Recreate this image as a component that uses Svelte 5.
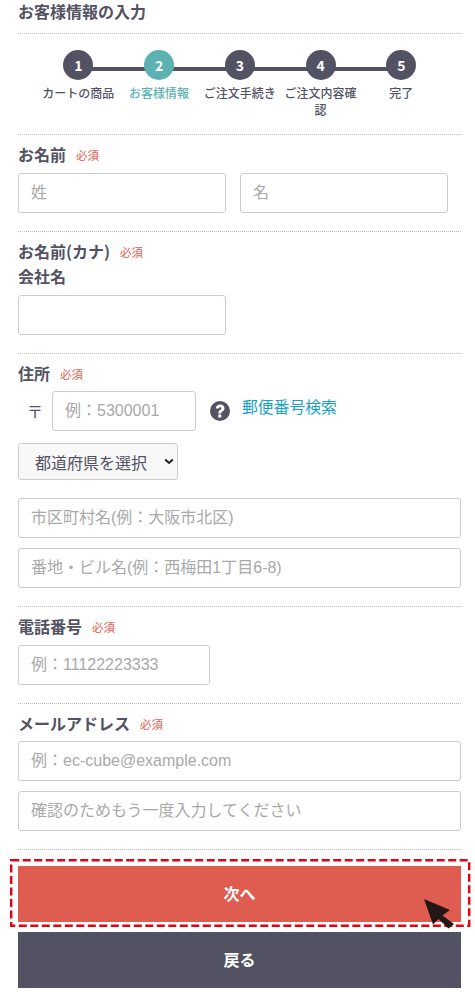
<script>
  const steps = [
    { num: 1, label: 'カートの商品' },
    { num: 2, label: 'お客様情報', active: true },
    { num: 3, label: 'ご注文手続き' },
    { num: 4, label: 'ご注文内容確認' },
    { num: 5, label: '完了' }
  ];
</script>

<div class="page">
  <h1 class="page-title">お客様情報の入力</h1>

  <div class="steps">
    {#each steps as step}
      <div class="step" class:active={step.active}>
        <span class="step-num">{step.num}</span>
        <span class="step-label">{step.label}</span>
      </div>
    {/each}
  </div>

  <section class="row row-name">
    <div class="label">お名前<span class="req">必須</span></div>
    <div class="pair">
      <input class="field half" type="text" placeholder="姓" />
      <input class="field half" type="text" placeholder="名" />
    </div>
  </section>

  <section class="row row-kana">
    <div class="label">お名前(カナ)<span class="req">必須</span></div>
    <div class="label company">会社名</div>
    <input class="field half" type="text" />
  </section>

  <section class="row row-address">
    <div class="label">住所<span class="req">必須</span></div>
    <div class="zip">
      <span class="zip-mark">〒</span>
      <input class="field zip-input" type="text" placeholder="例：5300001" />
      <svg class="help" viewBox="0 0 20 20" aria-hidden="true">
        <circle cx="10" cy="10" r="10" fill="#525263" />
        <path d="M5.800 7.500C6 5 7.800 3.500 10.200 3.500c2.600 0 4.300 1.500 4.300 3.700 0 1.600-.8 2.500-2.100 3.300-.9.600-1.100.9-1.100 1.600v.4H8.400v-.6c0-1.300.5-2.100 1.600-2.800.9-.6 1.300-1 1.300-1.700 0-.8-.5-1.200-1.200-1.200-.8 0-1.200.5-1.300 1.300z" fill="#fff" />
        <rect x="8.300" y="13.500" width="3" height="3" fill="#fff" />
      </svg>
      <span class="zip-link">郵便番号検索</span>
    </div>
    <div class="pref-wrap">
      <select class="pref">
        <option>都道府県を選択</option>
      </select>
      <svg class="chevron" viewBox="0 0 10 7" aria-hidden="true">
        <path d="M1.200 1.500 L5 5 L8.800 1.500" fill="none" stroke="#222" stroke-width="2" />
      </svg>
    </div>
    <input class="field full" type="text" placeholder="市区町村名(例：大阪市北区)" />
    <input class="field full" type="text" placeholder="番地・ビル名(例：西梅田1丁目6-8)" />
  </section>

  <section class="row row-tel">
    <div class="label">電話番号<span class="req">必須</span></div>
    <input class="field tel" type="text" placeholder="例：11122223333" />
  </section>

  <section class="row row-mail">
    <div class="label">メールアドレス<span class="req">必須</span></div>
    <input class="field full" type="text" placeholder="例：ec-cube@example.com" />
    <input class="field full" type="text" placeholder="確認のためもう一度入力してください" />
  </section>

  <div class="actions">
    <div class="next-wrap">
      <button class="btn next">次へ</button>
      <svg class="dashed" width="461" height="68" aria-hidden="true">
        <rect x="1.200" y="1.200" width="458" height="65.600" fill="none" stroke="#e60012" stroke-width="2.400" stroke-dasharray="8 3.500" />
      </svg>
      <svg class="pointer" viewBox="0 0 30 30" aria-hidden="true">
        <path d="M0 0 L26 11 L18.500 16.500 L30 25 L24.500 29.500 L14.500 20 L9 25.500 Z" fill="#231815" />
      </svg>
    </div>
    <button class="btn back">戻る</button>
  </div>
</div>

<style>
  :global(body) {
    margin: 0;
    background: #fff;
  }

  .page {
    width: 475px;
    height: 998px;
    box-sizing: border-box;
    padding: 0 14px 0 18px;
    overflow: hidden;
    font-family: "Noto Sans CJK JP", sans-serif;
    color: #525263;
  }

  .page-title {
    margin: 0;
    height: 22px;
    padding-bottom: 11px;
    font-size: 16px;
    line-height: 22px;
    font-weight: 700;
    border-bottom: 1px dotted #bbb;
  }

  .steps {
    display: flex;
    height: 84px;
    padding-top: 16px;
    padding-left: 20px;
    border-bottom: 1px dotted #bbb;
  }

  .step {
    position: relative;
    width: 80.750px;
    flex: none;
    display: flex;
    flex-direction: column;
    align-items: center;
    text-align: center;
    font-size: 12px;
    line-height: 17px;
    font-weight: 500;
  }

  .step::after {
    content: '';
    position: absolute;
    top: 17px;
    left: 50%;
    width: 100%;
    height: 4px;
    background: #525263;
  }

  .step:last-child::after {
    display: none;
  }

  .step-num {
    position: relative;
    z-index: 1;
    width: 30px;
    height: 30px;
    border-radius: 50%;
    background: #525263;
    color: #fff;
    font-size: 14px;
    line-height: 30px;
    font-weight: 700;
  }

  .step-label {
    margin-top: 4px;
    width: 74px;
  }

  .active .step-num {
    background: #5cb1b1;
  }

  .active .step-label {
    color: #5cb1b1;
  }

  .row {
    padding-top: 9px;
    border-bottom: 1px dotted #bbb;
  }

  .label {
    height: 20px;
    font-size: 16px;
    line-height: 20px;
    font-weight: 700;
  }

  .req {
    margin-left: 10px;
    font-size: 11.500px;
    line-height: 1;
    font-weight: 400;
    color: #de5d50;
    vertical-align: 1px;
  }

  .field {
    display: block;
    box-sizing: border-box;
    height: 40px;
    margin: 0;
    padding: 0 12px;
    border: 1px solid #ccc;
    border-radius: 3px;
    background: #fff;
    font-family: "Liberation Sans", "Noto Sans CJK JP", sans-serif;
    font-size: 16px;
    color: #525263;
    outline: none;
  }

  .field::placeholder {
    color: #a9a9a9;
    opacity: 1;
  }

  .half {
    width: 208px;
  }

  .full {
    width: 443px;
  }

  .tel {
    width: 192px;
  }

  .row-name {
    height: 87px;
  }

  .pair {
    display: flex;
    gap: 14px;
    margin-top: 9px;
  }

  .row-kana {
    height: 112px;
  }

  .company {
    margin-top: 5px;
  }

  .row-kana .field {
    margin-top: 9px;
  }

  .row-address {
    height: 243px;
  }

  .zip {
    display: flex;
    align-items: center;
    margin-top: 8px;
    height: 40px;
  }

  .zip-mark {
    width: 34px;
    padding-left: 9px;
    box-sizing: border-box;
    font-size: 16px;
  }

  .zip-input {
    width: 144px;
  }

  .help {
    width: 20px;
    height: 20px;
    margin-left: 14px;
  }

  .zip-link {
    margin-left: 12px;
    margin-top: -8px;
    font-size: 15.800px;
    line-height: 20px;
    color: #1a9fc9;
    white-space: nowrap;
  }

  .pref-wrap {
    position: relative;
    width: 160px;
    margin-top: 12px;
  }

  .pref {
    display: block;
    width: 160px;
    height: 37px;
    padding: 0 0 0 16px;
    appearance: none;
    border: 1px solid #ccc;
    border-radius: 3px;
    background: #f8f8f8;
    font-family: inherit;
    font-size: 16px;
    color: #525263;
    outline: none;
  }

  .chevron {
    position: absolute;
    left: 146px;
    top: 15px;
    width: 10px;
    height: 7px;
  }

  .row-address .full {
    margin-top: 10px;
  }

  .row-address .pref-wrap + .full {
    margin-top: 18px;
  }

  .row-tel {
    height: 87px;
  }

  .row-tel .field {
    margin-top: 9px;
  }

  .row-mail {
    height: 136px;
  }

  .row-mail .field {
    margin-top: 10px;
  }

  .row-mail .label + .field {
    margin-top: 8px;
  }

  .actions {
    padding-top: 16px;
    width: 443px;
  }

  .btn {
    display: block;
    width: 443px;
    height: 56px;
    border: 0;
    padding: 0 0 2px;
    font-family: inherit;
    font-size: 16px;
    font-weight: 700;
    color: #fff;
  }

  .next-wrap {
    position: relative;
    margin-bottom: 10px;
  }

  .dashed {
    position: absolute;
    left: -8px;
    top: -7px;
  }

  .next {
    background: #de5d50;
  }

  .back {
    background: #525263;
  }

  .pointer {
    position: absolute;
    left: 406px;
    top: 33px;
    width: 30px;
    height: 30px;
    z-index: 1;
  }
</style>
